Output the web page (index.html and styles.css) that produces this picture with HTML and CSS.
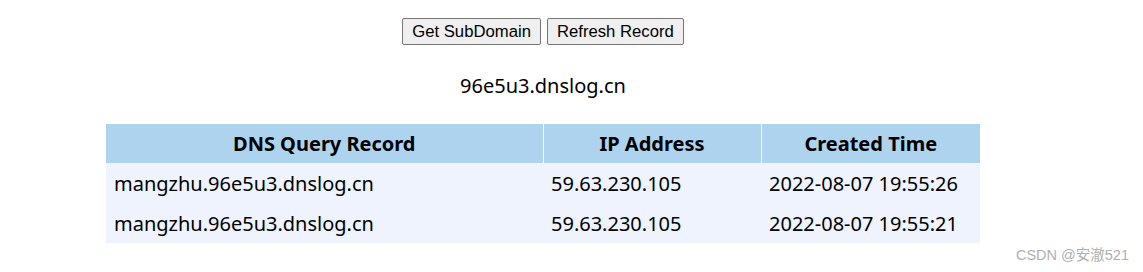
FILE: index.html
```html
<!DOCTYPE html>
<html lang="en">
<head>
    <meta charset="UTF-8">
    <title>DNSLog Platform</title>
    <link rel="stylesheet" href="styles.css">
</head>
<body>

<div class="page">
    <div class="actions">
        <button>Get SubDomain</button>
        <button>Refresh Record</button>
    </div>

    <p class="domain">96e5u3.dnslog.cn</p>

    <table class="records">
        <thead>
            <tr>
                <th class="col-dns">DNS Query Record</th>
                <th class="col-ip">IP Address</th>
                <th class="col-time">Created Time</th>
            </tr>
        </thead>
        <tbody>
            <tr>
                <td>mangzhu.96e5u3.dnslog.cn</td>
                <td>59.63.230.105</td>
                <td>2022-08-07 19:55:26</td>
            </tr>
            <tr>
                <td>mangzhu.96e5u3.dnslog.cn</td>
                <td>59.63.230.105</td>
                <td>2022-08-07 19:55:21</td>
            </tr>
        </tbody>
    </table>
</div>

<div class="watermark">CSDN @安澈521</div>

</body>
</html>
```

FILE: styles.css
```css
* {
    margin: 0;
    padding: 0;
    box-sizing: border-box;
}
body {
    background: white;
    font-family: "Noto Sans", "Noto Sans CJK SC", sans-serif;
    color: #000;
    height: 272px;
    overflow: hidden;
}
.page {
    width: 1086px;
    display: flex;
    flex-direction: column;
    align-items: center;
    padding-top: 18px;
}
.actions {
    display: flex;
    gap: 6px;
}
.actions button {
    font-family: "Liberation Sans", Arial, sans-serif;
    font-size: 16.7px;
    height: 27px;
    padding: 0 9px;
    background: #efefef;
    border: 1px solid #767676;
    border-radius: 2px;
    color: #000;
}
.domain {
    font-size: 20px;
    margin-top: 27px;
    line-height: 28px;
}
.records {
    margin-top: 24px;
    width: 874px;
    border-collapse: collapse;
    font-size: 20px;
}
.records th {
    background: #add3ef;
    height: 39px;
    font-weight: bold;
    text-align: center;
    border-left: 1px solid #fff;
}
.records th:first-child {
    border-left: none;
}
.records td {
    background: #eef3fe;
    height: 40px;
    padding: 0 8px;
    text-align: left;
}
.col-dns { width: 437px; }
.col-ip { width: 218px; }
.watermark {
    position: absolute;
    right: 14px;
    bottom: 8px;
    font-family: "Liberation Sans", "Noto Sans CJK SC", sans-serif;
    font-size: 14.5px;
    color: #b0b0b0;
}
```
